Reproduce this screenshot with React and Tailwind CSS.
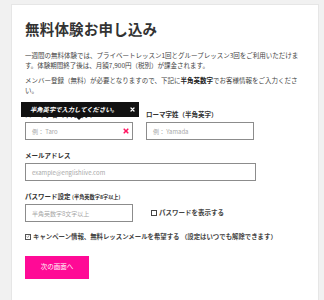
import React from 'react'

const font = { fontFamily: '"Noto Sans CJK JP", "Noto Sans", sans-serif' }

function Cross({ className }) {
  return (
    <svg viewBox="0 0 10 10" className={className}>
      <path d="M2 2 L8 8 M8 2 L2 8" stroke="currentColor" strokeWidth="2.6" strokeLinecap="round" />
    </svg>
  )
}

function Input({ placeholder, className = '', children }) {
  return (
    <div className={`relative h-[18px] border border-[#8c8c8c] bg-white flex items-center px-[6px] ${className}`}>
      <span className="text-[6px] text-[#a8a8a8]">{placeholder}</span>
      {children}
    </div>
  )
}

function Label({ children }) {
  return <div className="h-[10px] leading-[10px] text-[6.5px] font-bold text-[#333] mb-[3px]">{children}</div>
}

export default function App() {
  return (
    <div className="w-[324px] h-[300px] bg-[#f1f1f1] pl-[11px] pr-[5px] pt-[4px] overflow-hidden" style={font}>
      <div className="h-[320px] bg-white border border-[#e6e6e6] pl-[13px] pr-[16px] pt-[14px]">
        <h1 className="text-[14.5px] leading-[20px] font-bold text-[#333] tracking-[0.2px]">無料体験お申し込み</h1>

        <p className="mt-[11px] text-[6.5px] leading-[10px] text-[#444]">
          一週間の無料体験では、プライベートレッスン1回とグループレッスン3回をご利用いただけます。体験期間終了後は、月額7,900円（税別）が課金されます。
        </p>
        <p className="mt-[5px] text-[6.5px] leading-[10px] text-[#444]">
          メンバー登録（無料）が必要となりますので、下記に<span className="font-bold text-[#222]">半角英数字</span>でお客様情報をご入力ください。
        </p>

        <div className="relative mt-[14px] flex gap-[13px]">
          <div className="w-[108px]">
            <Label>ローマ字名（半角英字）</Label>
            <Input placeholder="例： Taro">
              <Cross className="absolute right-[3px] top-[5px] w-[6px] h-[6px] text-[#ff1560]" />
            </Input>
          </div>
          <div className="w-[108px]">
            <Label>ローマ字姓（半角英字）</Label>
            <Input placeholder="例： Yamada" />
          </div>

          <div className="absolute left-[-4px] top-[-7px] w-[118px] h-[15px] bg-[#111] flex items-center pl-[9px] pr-[4px] justify-between">
            <span className="text-[6.3px] italic font-bold text-white">半角英字で入力してください。</span>
            <Cross className="w-[5px] h-[5px] text-white" />
            <div className="absolute left-[55px] bottom-[-3px] w-0 h-0 border-l-[3px] border-r-[3px] border-t-[3px] border-l-transparent border-r-transparent border-t-[#111]" />
          </div>
        </div>

        <div className="mt-[10px] w-[231px]">
          <Label>メールアドレス</Label>
          <Input placeholder="example@englishlive.com" />
        </div>

        <div className="mt-[10px]">
          <Label>
            パスワード設定 <span className="text-[5.2px]">(半角英数字8字以上)</span>
          </Label>
          <div className="flex items-center">
            <Input placeholder="半角英数字8文字以上" className="w-[108px]" />
            <div className="ml-[18px] flex items-center gap-[2px]">
              <div className="w-[6px] h-[6px] border border-[#444]" />
              <span className="text-[6.5px] font-bold text-[#444]">パスワードを表示する</span>
            </div>
          </div>
        </div>

        <div className="mt-[10px] flex items-center gap-[2px]">
          <div className="w-[6px] h-[6px] border border-[#555] flex items-center justify-center">
            <svg viewBox="0 0 6 6" className="w-[5px] h-[5px]">
              <path d="M1 3 L2.5 4.5 L5 1" stroke="#444" strokeWidth="0.8" fill="none" />
            </svg>
          </div>
          <span className="text-[6.4px] font-bold text-[#444]">キャンペーン情報、無料レッスンメールを希望する （設定はいつでも解除できます）</span>
        </div>

        <button className="mt-[14px] w-[64px] h-[23px] bg-[#ff0a96] text-white text-[6.5px] flex items-center justify-center">
          次の画面へ
        </button>
      </div>
    </div>
  )
}
